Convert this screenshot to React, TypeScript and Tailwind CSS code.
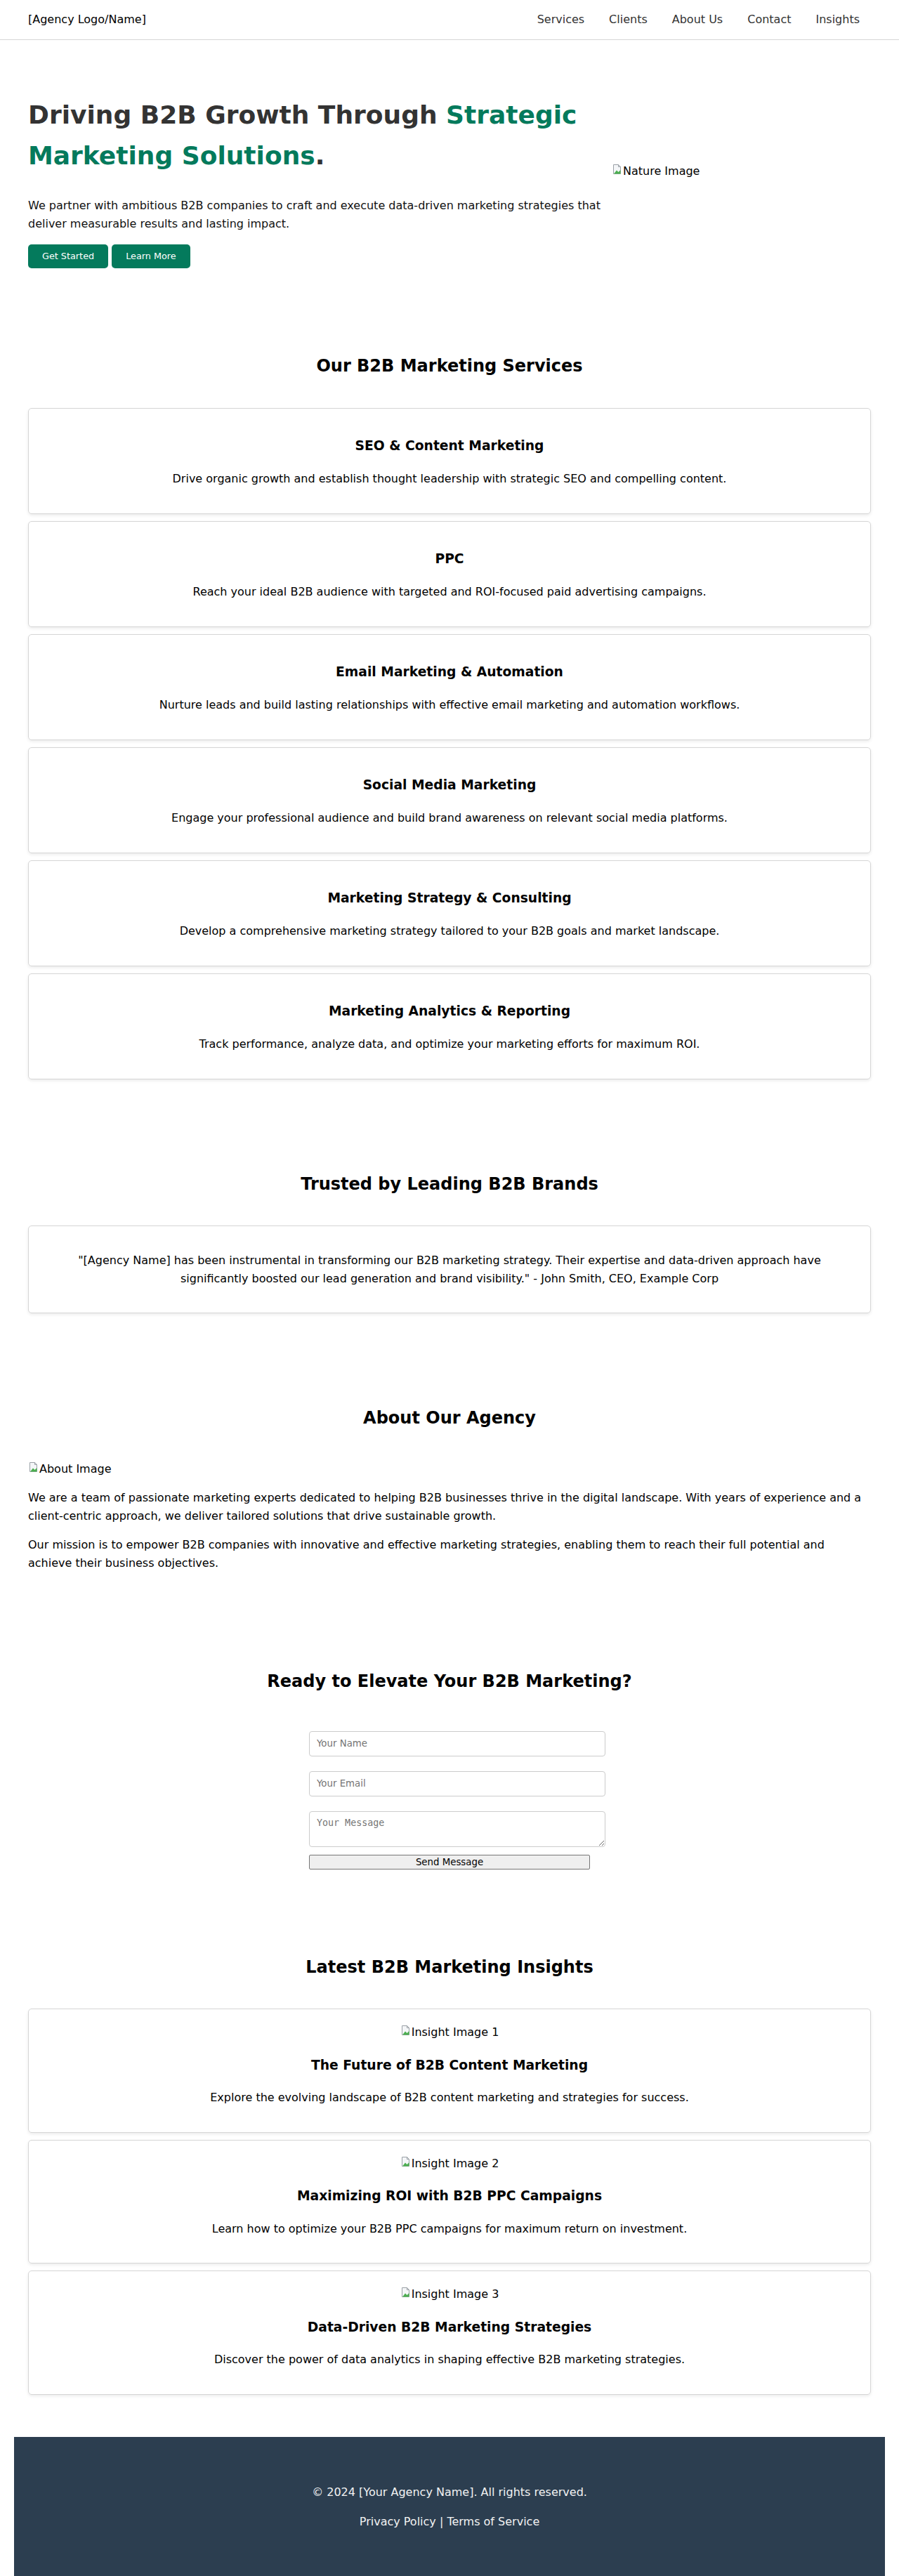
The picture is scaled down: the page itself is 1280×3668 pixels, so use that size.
import React from "react";

const services = [
  {
    title: "SEO & Content Marketing",
    text: "Drive organic growth and establish thought leadership with strategic SEO and compelling content.",
  },
  {
    title: "PPC",
    text: "Reach your ideal B2B audience with targeted and ROI-focused paid advertising campaigns.",
  },
  {
    title: "Email Marketing & Automation",
    text: "Nurture leads and build lasting relationships with effective email marketing and automation workflows.",
  },
  {
    title: "Social Media Marketing",
    text: "Engage your professional audience and build brand awareness on relevant social media platforms.",
  },
  {
    title: "Marketing Strategy & Consulting",
    text: "Develop a comprehensive marketing strategy tailored to your B2B goals and market landscape.",
  },
  {
    title: "Marketing Analytics & Reporting",
    text: "Track performance, analyze data, and optimize your marketing efforts for maximum ROI.",
  },
];

const insights = [
  {
    img: "Insight Image 1",
    title: "The Future of B2B Content Marketing",
    text: "Explore the evolving landscape of B2B content marketing and strategies for success.",
  },
  {
    img: "Insight Image 2",
    title: "Maximizing ROI with B2B PPC Campaigns",
    text: "Learn how to optimize your B2B PPC campaigns for maximum return on investment.",
  },
  {
    img: "Insight Image 3",
    title: "Data-Driven B2B Marketing Strategies",
    text: "Discover the power of data analytics in shaping effective B2B marketing strategies.",
  },
];

// broken image placeholder, like the browser draws for a missing picture
function BrokenImg({ alt }: { alt: string }) {
  return (
    <span className="inline-flex items-start">
      <svg width="16" height="16" viewBox="0 0 16 16" className="mt-[2px] shrink-0">
        <path d="M2.5 1.5h7l3 3v10h-10z" fill="#f4f6f8" stroke="#9aa0a6" />
        <path d="M9.5 1.5v3h3" fill="none" stroke="#9aa0a6" />
        <path d="M3 14.5l4-5 2.5 2.5 3-3v5.5z" fill="#4caf50" />
      </svg>
      <span>{alt}</span>
    </span>
  );
}

function Card({ children }: { children: React.ReactNode }) {
  return (
    <div className="mb-[10px] rounded-[5px] border border-[#d6d6d6] p-[20px] text-center shadow-[0_2px_4px_rgba(0,0,0,0.08)]">
      {children}
    </div>
  );
}

export default function App() {
  return (
    <div className="font-['DejaVu_Sans',sans-serif] text-[16px] leading-[1.6] text-black bg-white">
      <header className="flex h-[57px] items-center justify-between border-b border-[#d6d6d6] px-10">
        <div>[Agency Logo/Name]</div>
        <nav className="mr-[16px] flex gap-[35px] text-[#333]">
          <a href="#services">Services</a>
          <a href="#clients">Clients</a>
          <a href="#about">About Us</a>
          <a href="#contact">Contact</a>
          <a href="#insights">Insights</a>
        </nav>
      </header>

      <section className="flex items-start px-10 pt-[78px] pb-[60px]">
        <div className="w-[831px]">
          <h1 className="mb-[30px] text-[36px] font-bold leading-[1.6] text-[#333]">
            Driving B2B Growth Through <span className="text-[#047a5c]">Strategic Marketing Solutions</span>.
          </h1>
          <p className="text-[#111]">
            We partner with ambitious B2B companies to craft and execute data-driven marketing strategies that
            deliver measurable results and lasting impact.
          </p>
          <div className="mt-[17px] flex gap-[5px] text-[12.8px] text-white">
            <a className="flex h-[34px] items-center rounded-[5px] bg-[#047a5c] px-5" href="#contact">
              Get Started
            </a>
            <a className="flex h-[34px] items-center rounded-[5px] bg-[#047a5c] px-5" href="#services">
              Learn More
            </a>
          </div>
        </div>
        <div className="mt-[96px]">
          <BrokenImg alt="Nature Image" />
        </div>
      </section>

      <section id="services" className="px-10 pt-[60px] pb-[60px]">
        <h2 className="mb-[40px] text-center text-[24px] font-bold">Our B2B Marketing Services</h2>
        {services.map((s) => (
          <Card key={s.title}>
            <h3 className="my-[18.72px] text-[18.72px] font-bold">{s.title}</h3>
            <p className="my-4">{s.text}</p>
          </Card>
        ))}
      </section>

      <section id="clients" className="px-10 pt-[60px] pb-[60px]">
        <h2 className="mb-[40px] text-center text-[24px] font-bold">Trusted by Leading B2B Brands</h2>
        <Card>
          <p className="my-4">
            "[Agency Name] has been instrumental in transforming our B2B marketing strategy. Their expertise and
            data-driven approach have significantly boosted our lead generation and brand visibility." - John Smith,
            CEO, Example Corp
          </p>
        </Card>
      </section>

      <section id="about" className="px-10 pt-[60px] pb-[60px]">
        <h2 className="mb-[40px] text-center text-[24px] font-bold">About Our Agency</h2>
        <div>
          <BrokenImg alt="About Image" />
        </div>
        <p className="my-4">
          We are a team of passionate marketing experts dedicated to helping B2B businesses thrive in the digital
          landscape. With years of experience and a client-centric approach, we deliver tailored solutions that drive
          sustainable growth.
        </p>
        <p className="my-4">
          Our mission is to empower B2B companies with innovative and effective marketing strategies, enabling them to
          reach their full potential and achieve their business objectives.
        </p>
      </section>

      <section id="contact" className="px-10 pt-[60px] pb-[60px]">
        <h2 className="mb-[40px] text-center text-[24px] font-bold">Ready to Elevate Your B2B Marketing?</h2>
        <form className="mx-auto w-[400px] pt-[12px]" onSubmit={(e) => e.preventDefault()}>
          <input
            type="text"
            placeholder="Your Name"
            className="mb-[21px] block h-[36px] w-[422px] rounded-[4px] border border-[#ccc] px-[10px] text-[13.33px] placeholder:text-[#757575]"
          />
          <input
            type="email"
            placeholder="Your Email"
            className="mb-[21px] block h-[36px] w-[422px] rounded-[4px] border border-[#ccc] px-[10px] text-[13.33px] placeholder:text-[#757575]"
          />
          <textarea
            placeholder="Your Message"
            className="mb-[11px] block h-[51px] w-[422px] rounded-[4px] border border-[#ccc] px-[10px] py-[8px] font-['DejaVu_Sans_Mono',monospace] text-[13.33px] leading-[1.2] placeholder:text-[#757575]"
          />
          <button
            type="submit"
            className="block h-[21px] w-[400px] rounded-[2px] border border-[#767676] bg-[#efefef] text-[13.33px] leading-none"
          >
            Send Message
          </button>
        </form>
      </section>

      <section id="insights" className="px-10 pt-[60px] pb-[50px]">
        <h2 className="mb-[40px] text-center text-[24px] font-bold">Latest B2B Marketing Insights</h2>
        {insights.map((i) => (
          <Card key={i.title}>
            <div>
              <BrokenImg alt={i.img} />
            </div>
            <h3 className="my-[18.72px] text-[18.72px] font-bold">{i.title}</h3>
            <p className="my-4">{i.text}</p>
          </Card>
        ))}
      </section>

      <footer className="mx-[20px] bg-[#2c3e50] py-[50px] text-center text-[#f2f2f2]">
        <p className="my-4">© 2024 [Your Agency Name]. All rights reserved.</p>
        <p className="my-4">
          <a href="#privacy">Privacy Policy</a> | <a href="#terms">Terms of Service</a>
        </p>
      </footer>
    </div>
  );
}
